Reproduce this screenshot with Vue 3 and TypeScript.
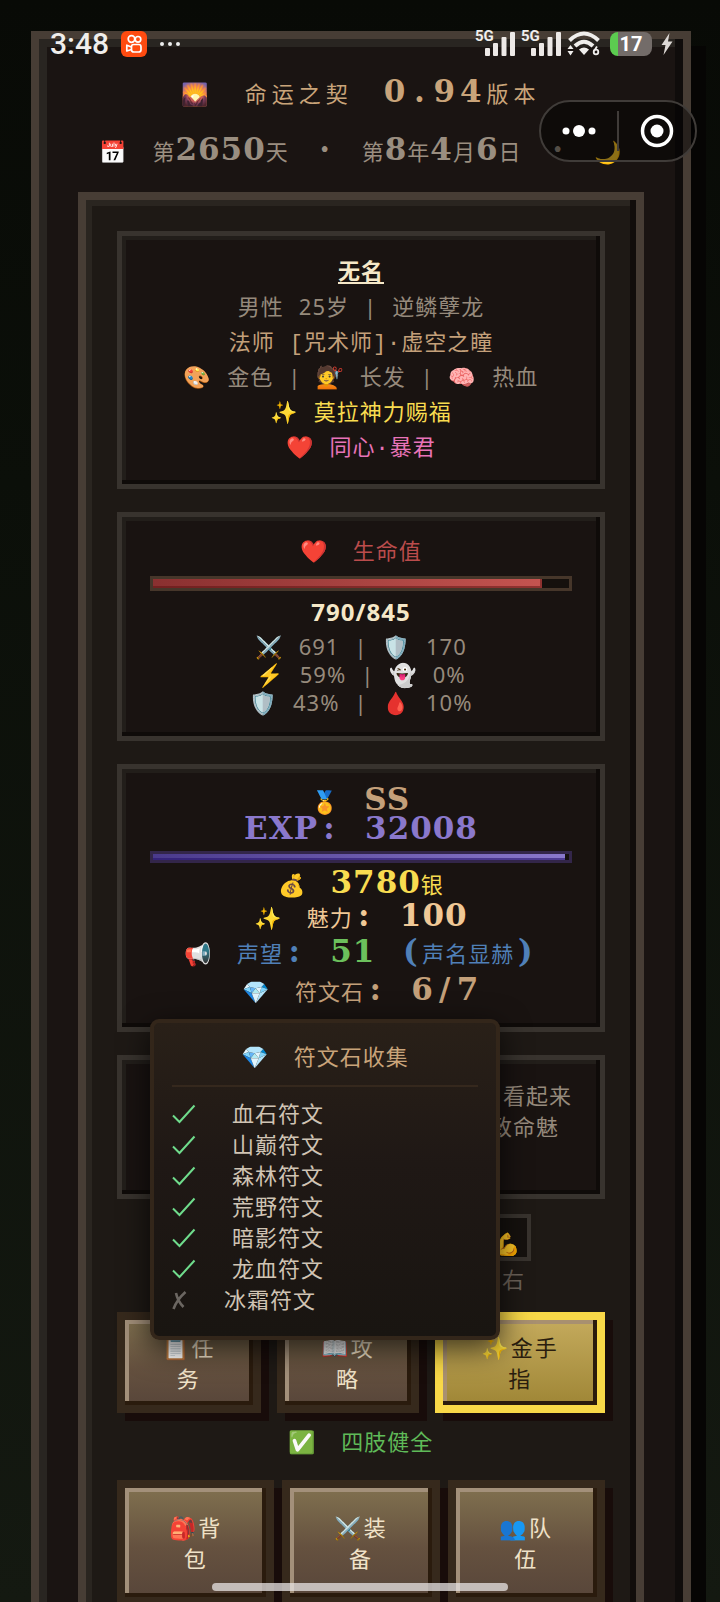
<script setup lang="ts">
import { ref } from 'vue'

interface Rune { name: string; found: boolean }
interface Stat { icon: string; value: string }

const hp = ref({ now: 790, max: 845 })
const stats: Stat[][] = [
  [{ icon: '⚔️', value: '691' }, { icon: '🛡️', value: '170' }],
  [{ icon: '⚡', value: '59%' }, { icon: '👻', value: '0%' }],
  [{ icon: '🛡️', value: '43%' }, { icon: '🩸', value: '10%' }],
]
const runes: Rune[] = [
  { name: '血石符文', found: true },
  { name: '山巅符文', found: true },
  { name: '森林符文', found: true },
  { name: '荒野符文', found: true },
  { name: '暗影符文', found: true },
  { name: '龙血符文', found: true },
  { name: '冰霜符文', found: false },
]
const quick = [
  { icon: '📋', a: '任', b: '务', gold: false },
  { icon: '📖', a: '攻', b: '略', gold: false },
  { icon: '✨', a: '金手', b: '指', gold: true },
]
const menu = [
  { icon: '🎒', a: '背', b: '包' },
  { icon: '⚔️', a: '装', b: '备' },
  { icon: '👥', a: '队', b: '伍' },
]
</script>

<template>
  <div class="screen">
    <main class="frame">
      <header class="head">
        <h1 class="row title"><span>🌄</span><span>命运之契</span><span><b class="px">0<span class="cell">.</span>94</b>版本</span></h1>
        <p class="row date">
          <span>📅</span><span>第<b class="px">2650</b>天</span><b class="px cell">·</b>
          <span>第<b class="px">8</b>年<b class="px">4</b>月<b class="px">6</b>日</span><b class="px cell">·</b><span>🌙</span>
        </p>
      </header>

      <section class="panel">
        <article class="card">
          <h2 class="name"><a href="#">无名</a></h2>
          <p class="row"><span>男性</span><span>25岁</span><span>|</span><span>逆鳞孽龙</span></p>
          <p class="row tan"><span>法师</span><span><span class="mono">[</span>咒术师<span class="mono">]·</span>虚空之瞳</span></p>
          <p class="row">
            <span>🎨</span><span>金色</span><span>|</span><span>💇</span><span>长发</span><span>|</span><span>🧠</span><span>热血</span>
          </p>
          <p class="row yellow"><span>✨</span><span>莫拉神力赐福</span></p>
          <p class="row pink"><span>❤️</span><span>同心<span class="mono">·</span>暴君</span></p>
        </article>

        <article class="card">
          <h3 class="row wide red"><span>❤️</span><span>生命值</span></h3>
          <div class="meter hp"><div class="fill" :style="{ width: (hp.now / hp.max) * 100 + '%' }"></div></div>
          <p class="hpnum">{{ hp.now }}/{{ hp.max }}</p>
          <p v-for="(pair, i) in stats" :key="i" class="row stat">
            <span>{{ pair[0].icon }}</span><span>{{ pair[0].value }}</span><span>|</span>
            <span>{{ pair[1].icon }}</span><span>{{ pair[1].value }}</span>
          </p>
        </article>

        <article class="card wealth">
          <p class="row wide rank tan"><span>🏅</span><b class="px">SS</b></p>
          <p class="row wide rank purple"><b class="px">EXP<span class="cell">:</span></b><b class="px">32008</b></p>
          <div class="meter exp"><div class="fill"></div></div>
          <p class="row wide yellow"><span>💰</span><span><b class="px">3780</b>银</span></p>
          <p class="row wide charm"><span>✨</span><span>魅力<b class="px cell">:</b></span><b class="px">100</b></p>
          <p class="row wide fame">
            <span>📢</span><span>声望<b class="px cell">:</b></span><b class="px green">51</b>
            <span><b class="px cell">(</b>声名显赫<b class="px cell">)</b></span>
          </p>
          <div class="anchor">
            <p class="row wide tan"><span>💎</span><span>符文石<b class="px cell">:</b></span><b class="px">6<span class="cell">/</span>7</b></p>
            <aside class="popup">
              <h3 class="row wide"><span>💎</span><span>符文石收集</span></h3>
              <ul class="runes">
                <li v-for="rune in runes" :key="rune.name">
                  <svg v-if="rune.found" class="mark" width="24" height="20" viewBox="0 0 24 20">
                    <path d="M1 11.500L7.500 18L22.500 1.500" fill="none" stroke="#6fdc8c" stroke-width="2" />
                  </svg>
                  <svg v-else class="mark" width="16" height="20" viewBox="0 0 16 20">
                    <path d="M4 3C5 8 7.500 13 11.500 17M13.500 2C9 6 4 12 1.500 19" fill="none" stroke="#6b6661" stroke-width="2.600" />
                  </svg>
                  <span>{{ rune.name }}</span>
                </li>
              </ul>
            </aside>
          </div>
        </article>

        <article class="card tale">
          <p><span>看起来</span><span class="second">致命魅</span></p>
        </article>

        <div class="limbs">
          <div class="limb">💪</div>
          <span>右</span>
        </div>

        <nav class="quick">
          <button v-for="b in quick" :key="b.a" type="button" class="key" :class="{ gold: b.gold }">
            <span>{{ b.icon }}{{ b.a }}</span><span>{{ b.b }}</span>
          </button>
        </nav>

        <p class="row wide health"><span>✅</span><span>四肢健全</span></p>

        <nav class="menu">
          <button v-for="b in menu" :key="b.a" type="button" class="key">
            <span>{{ b.icon }}{{ b.a }}</span><span>{{ b.b }}</span>
          </button>
        </nav>
      </section>
    </main>

    <div class="status">
      <div class="left">
        <span class="clock">3:48</span>
        <svg width="26" height="26" viewBox="0 0 26 26">
          <rect width="26" height="26" rx="6" fill="#ff4b10" />
          <g fill="none" stroke="#fff" stroke-width="1.700">
            <circle cx="10.500" cy="8" r="3.300" /><circle cx="17" cy="8.300" r="2.800" />
            <rect x="10.500" y="13.500" width="9.500" height="7.500" rx="2.300" />
            <path d="M10.500 16L5.800 14.200V20L10.500 18.500" stroke-linejoin="round" />
          </g>
        </svg>
        <svg width="22" height="6" viewBox="0 0 22 6" fill="#eee">
          <circle cx="3" cy="3" r="2" /><circle cx="11" cy="3" r="2" /><circle cx="19" cy="3" r="2" />
        </svg>
      </div>
      <div class="right">
        <div v-for="n in 2" :key="n" class="signal">
          <span>5G</span>
          <svg width="30" height="24" viewBox="0 0 30 24" fill="#ece8e6">
            <rect y="16" width="5" height="8" rx="1" /><rect x="8" y="11" width="5" height="13" rx="1" />
            <rect x="16.500" y="5" width="5" height="19" rx="1" /><rect x="25" width="5" height="24" rx="1" />
          </svg>
        </div>
        <svg width="34" height="26" viewBox="0 0 34 26">
          <g fill="none" stroke="#f0eeec" stroke-width="4">
            <path d="M2.500 9.500Q17 -4.500 31.500 9.500" /><path d="M8 15Q17 6.500 26 15" />
          </g>
          <path d="M12 18.500Q17 14.500 22 18.500L17 24Z" fill="#f0eeec" />
          <path d="M0.500 18L3.500 14L6.500 18ZM0.500 20L3.500 24.500L6.500 20Z" fill="#f0eeec" />
          <circle cx="29" cy="21" r="2.300" fill="none" stroke="#f0eeec" stroke-width="1.800" />
          <path d="M27 20L30 15.500" stroke="#f0eeec" stroke-width="1.800" />
        </svg>
        <div class="battery"><span>17</span></div>
        <svg width="12" height="22" viewBox="0 0 12 22"><path d="M8.500 0L0.500 12H4.500L2.500 22L11.500 8.500H7Z" fill="#ddd9d6" /></svg>
      </div>
    </div>

    <div class="capsule">
      <button type="button" aria-label="更多">
        <svg width="34" height="14" viewBox="0 0 34 14" fill="#fff">
          <circle cx="4" cy="7" r="3.500" /><circle cx="17" cy="7" r="6" /><circle cx="30" cy="7" r="3.500" />
        </svg>
      </button>
      <i></i>
      <button type="button" aria-label="关闭">
        <svg width="34" height="34" viewBox="0 0 34 34">
          <circle cx="17" cy="17" r="14.500" fill="none" stroke="#fff" stroke-width="3.500" />
          <circle cx="17" cy="17" r="6.500" fill="#fff" />
        </svg>
      </button>
    </div>
    <div class="home"></div>
  </div>
</template>

<style>
html, body { background: #0a0d08; }
</style>

<style scoped>
.screen {
  position: relative;
  height: 100vh;
  overflow: hidden;
  box-sizing: border-box;
  padding: 31px 29px 0 31px;
  background: linear-gradient(#080a06, #0b0f09 30%, #141911);
  color: #968a7c;
  font-family: "Noto Sans", "Noto Sans CJK SC", "Noto Color Emoji", sans-serif;
  font-size: 22px;
  letter-spacing: 1px;
}
.screen * { box-sizing: border-box; }
h1, h2, h3, p, ul { margin: 0; padding: 0; font-size: inherit; font-weight: 400; }
button { font: inherit; letter-spacing: inherit; color: inherit; padding: 0; border: 0; background: none; }

.frame {
  border: 8px solid #473d35;
  border-bottom: 0;
  padding: 25px 39px 0;
  background: #1a1412;
  box-shadow: inset -8px 0 #0f0c0b, inset 8px 8px #292521, 15px 15px #060504;
}
.row {
  --line: 35px;
  display: flex;
  justify-content: center;
  align-items: baseline;
  gap: 15px;
  height: var(--line);
  line-height: var(--line);
  white-space: nowrap;
}
.row.wide { gap: 24px; }
.px {
  font-family: "DejaVu Serif", serif;
  font-size: 31px;
  font-weight: 700;
  line-height: 1px;
}
.cell { display: inline-block; width: 23px; text-align: center; }
.mono { font-family: "Liberation Mono", monospace; }

.head { padding-bottom: 12px; }
.head .row { --line: 58px; }
.head .title { letter-spacing: 5px; gap: 31px; color: #c9a47a; }
.head .date { gap: 25px; color: #9a8e80; }

.panel {
  border: 8px solid #473d35;
  padding: 31px 31px 40px;
  background: #1e1915;
  box-shadow: inset -6px 0 #110d0b, inset 6px 6px #2a2520;
}
.card {
  margin-bottom: 23px;
  border: 5px solid #38332e;
  padding: 16px 28px 20px;
  background: #191311;
  box-shadow: inset -4px -4px #0f0b09, inset 4px 4px #221e1a;
}
.wealth { padding-bottom: 18px; }
.name { height: 37px; line-height: 37px; text-align: center; font-weight: 700; }
.name a { color: #f5e8c8; text-underline-offset: 3px; text-decoration-thickness: 2px; }
.tan { color: #c4a07a; }
.yellow { color: #f8dc50; }
.pink { color: #e873b8; }
.red { color: #bb4c4c; }
.purple { color: #8a78cc; }
.green { color: #6cc05c; }

.meter { display: flex; border: 3px solid #46362a; background: #15100d; }
.hp { margin-top: 8px; height: 15px; }
.hp .fill { background: linear-gradient(90deg, #8a3030, #c45450); box-shadow: inset -2px -2px rgba(90, 16, 16, .5); }
.exp { margin: 8px 0 4px; height: 12px; border-color: #33264a; }
.exp .fill { width: 99%; background: linear-gradient(90deg, #4a3a8c, #8a78cc); box-shadow: inset 0 -2px rgba(40, 20, 110, .6); }
.hpnum { height: 41px; line-height: 41px; text-align: center; font-size: 24px; font-weight: 700; color: #f5e8c8; }
.row.stat { --line: 28px; }
.row.rank { --line: 29px; }
.rank .px { line-height: inherit; }
.row.charm { --line: 31px; color: #f0c896; }
.row.fame { --line: 41px; color: #5080b8; }

.anchor { position: relative; }
.popup {
  position: absolute;
  z-index: 2;
  top: 100%;
  left: 0;
  width: 83%;
  margin-top: 10px;
  padding: 16px 18px 18px;
  border: 4px solid #33261a;
  border-radius: 9px;
  background: linear-gradient(#292018, #1f1815 45%, #191511);
  box-shadow: 0 8px 30px rgba(0, 0, 0, .7);
}
.popup .row { color: #c9a47a; }
.runes { list-style: none; margin-top: 11px; padding: 11px 0 3px; border-top: 2px solid #35281d; color: #d0c4b4; }
.runes li { display: flex; align-items: center; height: 31px; line-height: 31px; }
.mark { margin-right: 36px; }

.tale { line-height: 31px; text-align: right; }
.tale p { min-height: 98px; padding-top: 4px; }
.tale span { display: block; }
.tale .second { padding-right: 13px; }

.limbs { display: flex; flex-direction: column; align-items: flex-end; margin: -8px 74px 14px 0; line-height: 37px; color: #6c6259; }
.limb { width: 46px; height: 47px; border: 4px solid #38332e; background: #15110e; text-align: center; line-height: 50px; color: #968a7c; }
.limbs span { padding-right: 6px; }

.quick { display: grid; grid-template-columns: 144fr 143fr 170fr; gap: 16px; }
.menu { display: grid; grid-template-columns: 1fr 1fr 1fr; gap: 8px; }
.key {
  height: 101px;
  border: 8px solid #36291c;
  background: linear-gradient(#80704f, #65513f 55%, #58463a);
  box-shadow: inset -4px -4px #2a1b0d, inset 4px 4px #a3907a, 8px 8px #180c0a;
  line-height: 31px;
  letter-spacing: 2px;
  color: #f0e2c8;
}
.key span { display: block; }
.menu .key { height: 125px; }
.gold {
  border-color: #f8d848;
  background: linear-gradient(#c4aa5c, #9f8636);
  box-shadow: inset -4px -4px #2a1b0d, inset 4px 4px #a89070, 8px 8px #180c0a;
  color: #2a1d0e;
}
.row.health { --line: 56px; margin-bottom: 11px; color: #5fba58; }

.status {
  position: absolute;
  z-index: 3;
  top: 28px;
  left: 50px;
  right: 47px;
  height: 32px;
  display: flex;
  justify-content: space-between;
  align-items: center;
  color: #f0eeec;
  letter-spacing: 0;
}
.left, .right { display: flex; align-items: center; }
.left { gap: 12px; }
.clock { font-family: Roboto, sans-serif; font-size: 30px; font-weight: 500; line-height: 32px; }
.right { gap: 7px; }
.signal { position: relative; padding-left: 10px; line-height: 0; margin-right: -1px; }
.signal span { position: absolute; left: 0; top: -3px; font: 700 15px/14px Roboto, sans-serif; }
.battery {
  width: 42px;
  height: 24px;
  margin: 0 2px;
  border-radius: 8px;
  background: linear-gradient(90deg, #5ccc50 8px, #736c69 8px);
  text-align: center;
  font: 700 20px/24px Roboto, sans-serif;
  color: #fff;
}

.capsule {
  position: absolute;
  z-index: 3;
  top: 100px;
  right: 23px;
  width: 158px;
  height: 62px;
  display: flex;
  align-items: center;
  border: 2px solid #403c39;
  border-radius: 31px;
  background: rgba(0, 0, 0, .45);
}
.capsule button { flex: 1; display: flex; align-items: center; justify-content: center; }
.capsule i { width: 2px; height: 40px; background: #403c39; }
.home {
  position: absolute;
  z-index: 3;
  left: 0;
  right: 0;
  bottom: 11px;
  width: 41%;
  height: 8px;
  margin: 0 auto;
  border-radius: 4px;
  background: rgba(232, 228, 228, .75);
}
</style>
